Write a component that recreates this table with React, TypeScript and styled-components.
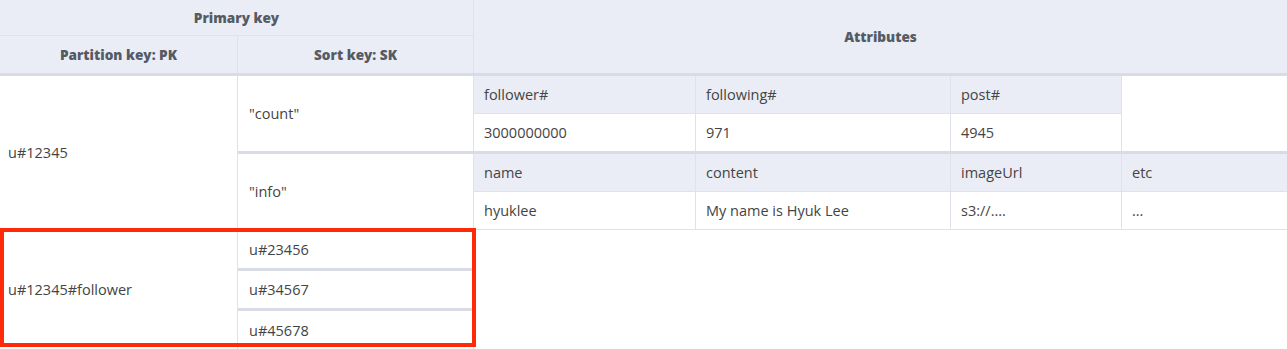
import React from "react";
import styled, { createGlobalStyle } from "styled-components";

const HEAD_BG = "#eaedf5";
const LINE = "#dfe2ea";
const SEP = "#d9dce4";
const TEXT = "#444";
const HEAD_TEXT = "#545b64";

const GlobalStyle = createGlobalStyle`
  html, body {
    margin: 0;
    padding: 0;
    background: #fff;
  }
  body {
    font-family: "Open Sans", "Noto Sans", "Liberation Sans", sans-serif;
    -webkit-font-smoothing: antialiased;
  }
`;

const Table = styled.div`
  width: 100%;
  background: #fff;
  color: ${TEXT};
  font-size: 14.5px;
`;

const HeadGrid = styled.div`
  display: grid;
  grid-template-columns: 238px 236px 1fr;
  grid-template-rows: 36px 37px;
  background: ${HEAD_BG};
  border-bottom: 3px solid ${SEP};
`;

const HeadCell = styled.div<{ $col: string; $row: string; $right?: boolean; $bottom?: boolean }>`
  grid-column: ${(p) => p.$col};
  grid-row: ${(p) => p.$row};
  display: flex;
  align-items: center;
  justify-content: center;
  font-weight: 800;
  font-size: 13.6px;
  color: ${HEAD_TEXT};
  border-right: ${(p) => (p.$right ? `1px solid ${LINE}` : "none")};
  border-bottom: ${(p) => (p.$bottom ? `1px solid ${LINE}` : "none")};
`;

const Group = styled.div<{ $divided?: boolean }>`
  position: relative;
  display: flex;
  border-bottom: ${(p) => (p.$divided ? `1px solid ${LINE}` : "none")};
`;

const KeyCell = styled.div`
  box-sizing: border-box;
  width: 238px;
  flex: none;
  display: flex;
  align-items: center;
  padding-left: 8px;
  border-right: 1px solid ${LINE};
`;

const ItemList = styled.div`
  flex: 1;
  display: flex;
  flex-direction: column;
`;

const SortList = styled.div`
  width: 236px;
  flex: none;
  display: flex;
  flex-direction: column;
`;

const Item = styled.div<{ $last?: boolean }>`
  display: flex;
  border-bottom: ${(p) => (p.$last ? "none" : `3px solid ${SEP}`)};
`;

/* content-box: 224px text area + 11px padding + 1px rule = 236px column */
const SortCell = styled.div<{ $h?: number; $sep?: boolean }>`
  box-sizing: content-box;
  width: 224px;
  min-height: ${(p) => (p.$h ? `${p.$h}px` : "37px")};
  flex: none;
  display: flex;
  align-items: center;
  padding-left: 11px;
  border-right: 1px solid ${LINE};
  border-bottom: ${(p) => (p.$sep ? `3px solid ${SEP}` : "none")};
`;

const AttrGrid = styled.div`
  flex: 1;
  display: grid;
  grid-template-columns: 222px 255px 171px 1fr;
  grid-auto-rows: auto;
`;

const AttrName = styled.div<{ $open?: boolean }>`
  box-sizing: border-box;
  height: 38px;
  display: flex;
  align-items: center;
  padding-left: 10px;
  background: ${HEAD_BG};
  border-bottom: 1px solid ${LINE};
  border-right: ${(p) => (p.$open ? "none" : `1px solid ${LINE}`)};
`;

const AttrValue = styled.div<{ $open?: boolean }>`
  box-sizing: border-box;
  height: 37px;
  display: flex;
  align-items: center;
  padding-left: 10px;
  background: #fff;
  border-right: ${(p) => (p.$open ? "none" : `1px solid ${LINE}`)};
`;

const Blank = styled.div`
  grid-column: 4;
  grid-row: 1 / span 2;
  background: #fff;
`;

const Empty = styled.div`
  flex: 1;
`;

const Highlight = styled.div`
  position: absolute;
  top: -2px;
  left: 0;
  width: 476px;
  bottom: 2px;
  box-sizing: border-box;
  border: 4px solid #ff2a0a;
  pointer-events: none;
`;

type Attr = { name: string; value: string };

const countAttrs: Attr[] = [
  { name: "follower#", value: "3000000000" },
  { name: "following#", value: "971" },
  { name: "post#", value: "4945" },
];

const infoAttrs: Attr[] = [
  { name: "name", value: "hyuklee" },
  { name: "content", value: "My name is Hyuk Lee" },
  { name: "imageUrl", value: "s3://...." },
  { name: "etc", value: "..." },
];

function Attributes({ attrs }: { attrs: Attr[] }) {
  const full = attrs.length === 4;
  return (
    <AttrGrid>
      {attrs.map((a, i) => (
        <AttrName key={a.name} $open={full && i === 3}>
          {a.name}
        </AttrName>
      ))}
      {!full && <Blank />}
      {attrs.map((a, i) => (
        <AttrValue key={a.name} $open={full && i === 3}>
          {a.value}
        </AttrValue>
      ))}
    </AttrGrid>
  );
}

const followers = [
  { key: "u#23456", h: 38 },
  { key: "u#34567", h: 37 },
  { key: "u#45678", h: 38 },
];

export default function App() {
  return (
    <>
      <GlobalStyle />
      <Table>
        <HeadGrid>
          <HeadCell $col="1 / span 2" $row="1" $right $bottom>
            Primary key
          </HeadCell>
          <HeadCell $col="3" $row="1 / span 2">
            Attributes
          </HeadCell>
          <HeadCell $col="1" $row="2" $right>
            Partition key: PK
          </HeadCell>
          <HeadCell $col="2" $row="2" $right>
            Sort key: SK
          </HeadCell>
        </HeadGrid>

        <Group $divided>
          <KeyCell>u#12345</KeyCell>
          <ItemList>
            <Item>
              <SortCell>"count"</SortCell>
              <Attributes attrs={countAttrs} />
            </Item>
            <Item $last>
              <SortCell>"info"</SortCell>
              <Attributes attrs={infoAttrs} />
            </Item>
          </ItemList>
        </Group>

        <Group>
          <KeyCell>u#12345#follower</KeyCell>
          <SortList>
            {followers.map((f, i) => (
              <SortCell key={f.key} $h={f.h} $sep={i < followers.length - 1}>
                {f.key}
              </SortCell>
            ))}
          </SortList>
          <Empty />
          <Highlight />
        </Group>
      </Table>
    </>
  );
}
